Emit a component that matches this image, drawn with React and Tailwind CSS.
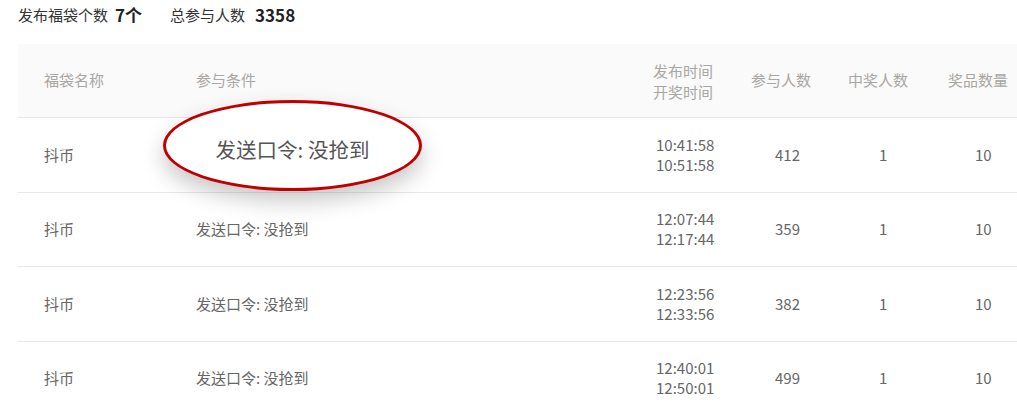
const rows = [
  { name: '抖币', cond: '', t1: '10:41:58', t2: '10:51:58', joined: 412, winners: 1, prizes: 10 },
  { name: '抖币', cond: '发送口令: 没抢到', t1: '12:07:44', t2: '12:17:44', joined: 359, winners: 1, prizes: 10 },
  { name: '抖币', cond: '发送口令: 没抢到', t1: '12:23:56', t2: '12:33:56', joined: 382, winners: 1, prizes: 10 },
  { name: '抖币', cond: '发送口令: 没抢到', t1: '12:40:01', t2: '12:50:01', joined: 499, winners: 1, prizes: 10 },
]

const font = { fontFamily: '"Noto Sans CJK SC", "Noto Sans", sans-serif' }

export default function App() {
  return (
    <div className="relative w-[1017px] h-[414px] overflow-hidden bg-white text-[15px]" style={font}>
      {/* Summary */}
      <div className="flex items-center h-[30px] pl-[18px] text-[15px] text-[#333]">
        <span>发布福袋个数</span>
        <span className="ml-[7px] text-[17px] font-bold text-[#222]">7个</span>
        <span className="ml-[28px]">总参与人数</span>
        <span className="ml-[10px] text-[17px] font-bold text-[#222]">3358</span>
      </div>

      {/* Table */}
      <div className="ml-[18px] mt-[14px] w-[1020px]">
        <div className="flex items-center h-[74px] bg-[#fafafa] border-b border-[#e6e6e6] text-[#a9a6a3]">
          <div className="w-[152px] pl-[26px]">福袋名称</div>
          <div className="w-[457px] pl-[26px]">参与条件</div>
          <div className="w-[108px] pl-[26px] leading-[21px]">
            <div>发布时间</div>
            <div>开奖时间</div>
          </div>
          <div className="w-[95px] pl-[16px]">参与人数</div>
          <div className="w-[100px] pl-[18px]">中奖人数</div>
          <div className="w-[100px] pl-[18px]">奖品数量</div>
        </div>

        {rows.map((r, i) => (
          <div key={i} className="flex items-center h-[74.5px] border-b border-[#e8e8e8] text-[#666]">
            <div className="w-[152px] pl-[26px]">{r.name}</div>
            <div className="w-[457px] pl-[26px]">{r.cond}</div>
            <div className="w-[108px] pl-[29px] leading-[20px]">
              <div>{r.t1}</div>
              <div>{r.t2}</div>
            </div>
            <div className="w-[95px] pl-[40px]">{r.joined}</div>
            <div className="w-[100px] pl-[49px]">{r.winners}</div>
            <div className="w-[100px] pl-[45px]">{r.prizes}</div>
          </div>
        ))}
      </div>

      {/* Magnified callout over the first row's condition */}
      <div className="absolute left-[163px] top-[100px] w-[259px] h-[91px] rounded-[50%] border-[3px] border-[#c00000] bg-white shadow-[0_10px_22px_rgba(0,0,0,0.22)] flex items-center justify-center pt-[8px] text-[20.5px] text-[#555]">
        发送口令: 没抢到
      </div>
    </div>
  )
}
